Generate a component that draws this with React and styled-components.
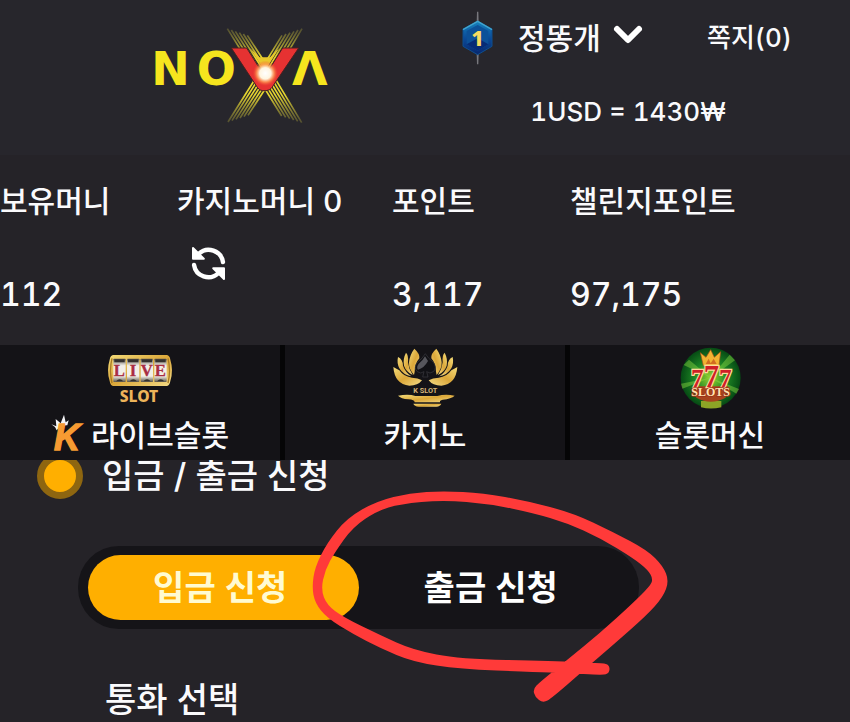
import React, { useState } from 'react';
import styled, { createGlobalStyle } from 'styled-components';

const GlobalStyle = createGlobalStyle`
  * {
    box-sizing: border-box;
  }
  body {
    margin: 0;
    background: #252328;
    color: #fafafc;
    font-family: Inter, 'Noto Sans CJK KR', sans-serif;
    font-weight: 500;
    font-variant-numeric: tabular-nums;
    overflow-x: hidden;
  }
  button {
    border: 0;
    padding: 0;
    background: none;
    color: inherit;
    font: inherit;
    cursor: pointer;
  }
  a {
    color: inherit;
    text-decoration: none;
  }
  svg {
    display: block;
    flex: none;
    overflow: visible;
  }
`;

const Page = styled.div`
  height: 100vh;
  overflow: hidden;
`;

const Header = styled.header`
  display: flex;
  justify-content: space-between;
  padding: 0 54px 0 140px;
  height: 155px;
  background: #27262c;
`;

const LogoLink = styled.a`
  padding-top: 20px;
`;

const Account = styled.div`
  display: flex;
  flex-direction: column;
  width: 336px;
  padding-top: 12px;
`;

const UserRow = styled.div`
  display: flex;
  align-items: center;
  height: 52px;
`;

const UserButton = styled.button`
  display: flex;
  align-items: center;
  gap: 12px;
  margin-left: 22px;
  font-size: 30px;
  line-height: 44px;

  svg {
    margin-bottom: 6px;
  }
`;

const MessageLink = styled.a`
  margin-left: auto;
  padding-right: 4px;
  font-size: 26px;
  line-height: 44px;
`;

const Rate = styled.div`
  margin-top: 32px;
  text-align: center;
  font-size: 26px;
  line-height: 32px;
`;

const Balances = styled.section`
  display: grid;
  grid-template-columns: 177fr 215fr 178fr 280fr;
  height: 190px;
  padding-top: 24px;
`;

const Balance = styled.div`
  display: flex;
  flex-direction: column;
  align-items: flex-start;
  white-space: nowrap;
`;

const BalanceLabel = styled.div`
  font-size: 30px;
  line-height: 44px;
`;

const BalanceValue = styled.div`
  margin-top: 52px;
  font-size: 32px;
  line-height: 40px;
`;

const RefreshButton = styled.button`
  margin: 24px 0 0 15px;
`;

const Tabs = styled.nav`
  position: relative;
  z-index: 1;
  display: grid;
  grid-template-columns: repeat(3, 1fr);
  gap: 5px;
  height: 115px;
  background: #050506;
`;

const Tab = styled.a`
  display: flex;
  flex-direction: column;
  align-items: center;
  padding-top: 2px;
  background: #141317;
`;

const TabLabel = styled.span`
  display: flex;
  align-items: center;
  gap: 4px;
  font-size: 30px;
  line-height: 44px;

  svg {
    margin-bottom: 6px;
  }
`;

const Main = styled.main`
  position: relative;
  margin-top: -9px;
`;

/* scrolled partly under the tabs */
const Title = styled.h1`
  display: flex;
  align-items: center;
  gap: 19px;
  margin: 0;
  padding-left: 37px;
  font-size: 34px;
  font-weight: 500;
  line-height: 50px;
`;

const Dot = styled.span`
  width: 46px;
  height: 46px;
  border: 7px solid #8e6610;
  border-radius: 50%;
  background: #ffaf00;
`;

const Segment = styled.div`
  display: grid;
  grid-template-columns: 1fr 1fr;
  width: 66%;
  margin: 45px 0 0 78px;
  padding: 9px 10px;
  border-radius: 41px;
  background: #151418;
`;

const SegmentButton = styled.button`
  height: 65px;
  padding-right: 6px;
  border-radius: 33px;
  background: ${({ $active }) => ($active ? '#ffaf00' : 'transparent')};
  color: ${({ $active }) => ($active ? '#fffbd2' : '#fff')};
  font-size: 34px;
  font-weight: 700;
  line-height: 50px;
`;

const FieldTitle = styled.h2`
  margin: 46px 0 0 105px;
  font-size: 34px;
  font-weight: 500;
  line-height: 50px;
`;

const Marker = styled.svg`
  position: absolute;
  left: 300px;
  top: 29px;
  pointer-events: none;
`;

const rays = [0, 1, 2, 3, 4, 5];

const Logo = () => (
  <svg width="200" height="110" viewBox="0 0 600 330" role="img" aria-label="NOVA">
    <defs>
      <linearGradient id="ray" x1="0" y1="25" x2="0" y2="310" gradientUnits="userSpaceOnUse">
        <stop offset="0" stopColor="#8d8738" stopOpacity="0.4" />
        <stop offset="0.3" stopColor="#e5d52f" />
        <stop offset="0.7" stopColor="#e5d52f" />
        <stop offset="1" stopColor="#8d8738" stopOpacity="0.4" />
      </linearGradient>
      <radialGradient id="glow">
        <stop offset="0" stopColor="#fff" />
        <stop offset="0.45" stopColor="#fff5df" />
        <stop offset="0.7" stopColor="#ff9b56" stopOpacity="0.8" />
        <stop offset="1" stopColor="#f24a2c" stopOpacity="0" />
      </radialGradient>
    </defs>
    <g fill="#f6e51e" fontFamily="DejaVu Sans" fontWeight="700" fontSize="138">
      <text x="34" y="196">N</text>
      <text x="170" y="196">O</text>
      <text x="456" y="196">Λ</text>
    </g>
    <g stroke="url(#ray)" strokeWidth="5">
      {rays.map((i) => (
        <g key={i}>
          <path d={`M${262 + i * 12} ${26 + i * 4}L${346 + i * 10} 160L${485 - (5 - i) * 12} ${308 - (5 - i) * 4}`} fill="none" />
          <path d={`M${486 - i * 12} ${26 + i * 4}L${406 - i * 10} 160L${264 + (5 - i) * 12} ${306 - (5 - i) * 4}`} fill="none" />
        </g>
      ))}
    </g>
    <path d="M274 84H320L374 170L428 84H476L396 202Q390 212 378 212H368Q358 212 352 202Z" fill="#e63232" stroke="#4b2020" strokeWidth="3" />
    <path d="M330 84L374 154L418 84L390 112H358Z" fill="#e9c92c" />
    <circle cx="376" cy="160" r="38" fill="url(#glow)" />
  </svg>
);

const LevelBadge = () => (
  <svg width="36" height="54" viewBox="0 0 108 162">
    <defs>
      <linearGradient id="badge" x1="0" y1="0" x2="0" y2="1">
        <stop offset="0" stopColor="#1683bd" />
        <stop offset="0.5" stopColor="#0b4c9a" />
        <stop offset="1" stopColor="#07256b" />
      </linearGradient>
    </defs>
    <path d="M51 2h4l1 32h-6zM50 128h6l-1 32h-4z" fill="#77777d" />
    <path d="M53 30L96 54V106L53 131L9 106V54Z" fill="url(#badge)" stroke="#0e4f8f" strokeWidth="3" />
    <path d="M9 56L53 31L96 56" fill="none" stroke="#42a5cd" strokeWidth="4" />
    <path d="M53 42L85 60V100L53 119L20 100V60Z" fill="#0c5199" />
    <path d="M20 100L53 82L85 100L53 119Z" fill="#072b75" />
    <text x="53" y="105" textAnchor="middle" fill="#f6db62" fontFamily="Noto Sans" fontWeight="800" fontSize="66">1</text>
  </svg>
);

const ChevronIcon = () => (
  <svg width="30" height="20" viewBox="0 0 30 20" fill="none" stroke="#fff" strokeWidth="6" strokeLinecap="round" strokeLinejoin="round">
    <path d="M4 4L15 15L26 4" />
  </svg>
);

const RefreshIcon = () => (
  <svg width="33" height="33" viewBox="0 0 98 98">
    <g id="half">
      <path d="M92 45A43 43 0 0 0 20 20" fill="none" stroke="#fff" strokeWidth="13" strokeLinecap="round" />
      <path d="M3 3L35 35H3Z" fill="#fff" stroke="#fff" strokeWidth="6" strokeLinejoin="round" />
    </g>
    <use href="#half" transform="rotate(180 49 49)" />
  </svg>
);

const GoldGradient = ({ id }) => (
  <linearGradient id={id} x1="0" y1="0" x2="1" y2="1">
    <stop offset="0" stopColor="#f4dc7a" />
    <stop offset="0.5" stopColor="#dba739" />
    <stop offset="1" stopColor="#f4dc88" />
  </linearGradient>
);

const LiveSlotIcon = () => (
  <svg width="66" height="66" viewBox="0 0 198 198">
    <defs>
      <GoldGradient id="reel" />
      <linearGradient id="drum" x1="0" y1="0" x2="0" y2="1">
        <stop offset="0" stopColor="#57544c" />
        <stop offset="0.3" stopColor="#f2efe8" />
        <stop offset="0.75" stopColor="#f2efe8" />
        <stop offset="1" stopColor="#5a5448" />
      </linearGradient>
    </defs>
    <path d="M20 24H178Q188 24 190 38Q200 70 190 102Q188 117 178 117H20Q10 117 8 102Q-2 70 8 38Q10 24 20 24Z" fill="url(#reel)" />
    <path d="M15 34Q6 70 15 108M183 34Q192 70 183 108" fill="none" stroke="#a87924" strokeWidth="4" />
    {['L', 'I', 'V', 'E'].map((letter, i) => (
      <g key={letter}>
        <rect x={19 + i * 41} y="35" width="37" height="70" rx="2" fill="url(#drum)" />
        <path d={`M${22 + i * 41} 37h31v9h-31zM${27 + i * 41} 103q11-12 22 0z`} fill="#34312e" />
        <text x={37 + i * 41} y="87" textAnchor="middle" fill="#a92d42" stroke="#a92d42" strokeWidth="1" fontFamily="Liberation Serif" fontWeight="700" fontSize="50">
          {letter}
        </text>
      </g>
    ))}
    <text x="96" y="165" textAnchor="middle" fill="#edb45a" fontFamily="Noto Sans" fontWeight="800" fontSize="47">SLOT</text>
  </svg>
);

const KLogo = () => (
  <svg width="36" height="38" viewBox="0 0 108 114">
    <path d="M1 34L16 40L14 18L29 31L39 5L44 28L53 22L49 37Q30 36 17 52Q13 40 1 34Z" fill="#f4f4f6" />
    <text x="9" y="112" fill="#f79b32" stroke="#f79b32" strokeWidth="4" fontFamily="Liberation Sans" fontWeight="700" fontStyle="italic" fontSize="108">K</text>
  </svg>
);

const Petals = () => (
  <>
    <path d="M67 5Q84 20 82 34Q68 50 68 74L66 84Q50 66 51 46Q53 24 67 5Z" />
    <path d="M42 17Q50 24 48 46Q50 66 62 84Q42 74 36 56Q32 36 42 17Z" />
    <path d="M18 30Q32 36 33 56Q40 76 58 88Q34 84 22 64Q14 48 18 30Z" />
    <path d="M4 60Q14 66 22 70Q36 90 60 92Q78 92 90 100Q78 116 52 116Q8 112 4 60Z" />
  </>
);

const LotusIcon = () => (
  <svg width="66" height="66" viewBox="0 0 198 198">
    <defs>
      <GoldGradient id="gold" />
    </defs>
    <g fill="url(#gold)">
      <Petals />
      <g transform="translate(200 0) scale(-1 1)">
        <Petals />
      </g>
      <path d="M18 146Q50 140 70 147H136Q160 140 188 146Q178 155 152 158Q142 160 144 166H68Q68 158 49 157Q27 155 18 146Z" />
      <path d="M64 170H148Q145 178 133 179H80Q67 178 64 170Z" />
    </g>
    <path d="M100 20Q108 34 124 46Q136 62 124 74Q114 82 104 74L108 90H92L96 74Q86 82 76 74Q64 62 76 46Q92 34 100 20Z" fill="#111115" stroke="#3c3c42" strokeWidth="2" />
    <path d="M99 28Q92 42 80 50Q72 60 78 68Q96 64 108 42Z" fill="#56565c" />
    <text x="100" y="139" textAnchor="middle" fill="#d6b478" fontFamily="Roboto" fontWeight="700" fontSize="22">K SLOT</text>
  </svg>
);

const SevensIcon = () => (
  <svg width="66" height="66" viewBox="0 0 198 198">
    <defs>
      <radialGradient id="felt">
        <stop offset="0" stopColor="#9bd531" />
        <stop offset="0.55" stopColor="#1c8424" />
        <stop offset="1" stopColor="#064a14" />
      </radialGradient>
    </defs>
    <circle cx="101" cy="92" r="90" fill="url(#felt)" />
    <path d="M101 92L20 54L36 38ZM101 92L158 23L174 40ZM101 92L12 110L16 125ZM101 92L186 126L178 140Z" fill="#8cdb43" opacity="0.45" />
    <path d="M72 162H133V181Q101 188 72 181Z" fill="#8ca426" />
    <path d="M50 118H154L146 152Q101 176 58 152Z" fill="#a7441d" />
    <path d="M79 56L70 17L87 31L101 8L112 31L131 14L126 56Q102 62 79 56Z" fill="#f1b332" stroke="#a94e18" strokeWidth="2" />
    <path d="M86 51L95 35L101 49L110 35L119 51Z" fill="#d26c20" />
    <text x="103" y="119" textAnchor="middle" fill="#cf1f28" stroke="#ffdc9c" strokeWidth="7" paintOrder="stroke" fontFamily="Liberation Serif" fontWeight="700" fontSize="76">
      7<tspan fontSize="92">7</tspan>7
    </text>
    <text x="101" y="147" textAnchor="middle" fill="#ffe4b1" stroke="#9b3018" strokeWidth="5" paintOrder="stroke" fontFamily="Liberation Serif" fontWeight="700" fontSize="36">SLOTS</text>
  </svg>
);

// outline of the hand drawn stroke, walked once around
const strokePoints = [
  [600, 675], [567, 673], [533, 672], [460, 669], [413, 662], [380, 648], [353, 634], [327, 618],
  [315, 603], [312, 587], [315, 567], [327, 543], [347, 518], [377, 501], [410, 493], [443, 491],
  [483, 493], [527, 501], [573, 513], [613, 532], [647, 550], [663, 566], [669, 581], [663, 597],
  [647, 615], [613, 645], [592, 663], [552, 698], [543, 703], [535, 697], [533, 689], [540, 682],
  [567, 660], [600, 633], [633, 603], [650, 586], [653, 579], [648, 570], [633, 558], [600, 538],
  [567, 523], [533, 513], [490, 504], [443, 500], [400, 504], [377, 511], [353, 527], [335, 552],
  [325, 570], [321, 590], [327, 605], [343, 617], [380, 635], [413, 650], [460, 659], [553, 661],
  [600, 663], [608, 664], [610, 669], [608, 674],
];

const smooth = (points) => {
  const mid = (a, b) => `${(a[0] + b[0]) / 2} ${(a[1] + b[1]) / 2}`;
  const last = points[points.length - 1];
  const curves = points.map((p, i) => `Q${p[0]} ${p[1]} ${mid(p, points[(i + 1) % points.length])}`);
  return `M${mid(last, points[0])}${curves.join('')}Z`;
};

const balances = [
  { label: '보유머니', value: '112' },
  { label: '카지노머니 0', refresh: true },
  { label: '포인트', value: '3,117' },
  { label: '챌린지포인트', value: '97,175' },
];

const tabs = [
  { label: '라이브슬롯', Icon: LiveSlotIcon, Mark: KLogo },
  { label: '카지노', Icon: LotusIcon },
  { label: '슬롯머신', Icon: SevensIcon },
];

const App = () => {
  const [active, setActive] = useState('입금 신청');

  return (
    <Page>
      <GlobalStyle />
      <Header>
        <LogoLink href="#">
          <Logo />
        </LogoLink>
        <Account>
          <UserRow>
            <LevelBadge />
            <UserButton type="button">
              정똥개
              <ChevronIcon />
            </UserButton>
            <MessageLink href="#messages">쪽지(0)</MessageLink>
          </UserRow>
          <Rate>1USD = 1430₩</Rate>
        </Account>
      </Header>

      <Balances>
        {balances.map(({ label, value, refresh }) => (
          <Balance key={label}>
            <BalanceLabel>{label}</BalanceLabel>
            {refresh ? (
              <RefreshButton type="button" aria-label="새로고침">
                <RefreshIcon />
              </RefreshButton>
            ) : (
              <BalanceValue>{value}</BalanceValue>
            )}
          </Balance>
        ))}
      </Balances>

      <Tabs>
        {tabs.map(({ label, Icon, Mark }) => (
          <Tab href="#games" key={label}>
            <Icon />
            <TabLabel>
              {Mark && <Mark />}
              {label}
            </TabLabel>
          </Tab>
        ))}
      </Tabs>

      <Main>
        <Title>
          <Dot />
          입금 / 출금 신청
        </Title>
        <Segment>
          {['입금 신청', '출금 신청'].map((name) => (
            <SegmentButton
              type="button"
              key={name}
              $active={active === name}
              aria-pressed={active === name}
              onClick={() => setActive(name)}
            >
              {name}
            </SegmentButton>
          ))}
        </Segment>
        <FieldTitle>통화 선택</FieldTitle>
        <Marker width="380" height="230" viewBox="300 480 380 230" aria-hidden="true">
          <path d={smooth(strokePoints)} fill="#ff3a39" />
        </Marker>
      </Main>
    </Page>
  );
};

export default App;
